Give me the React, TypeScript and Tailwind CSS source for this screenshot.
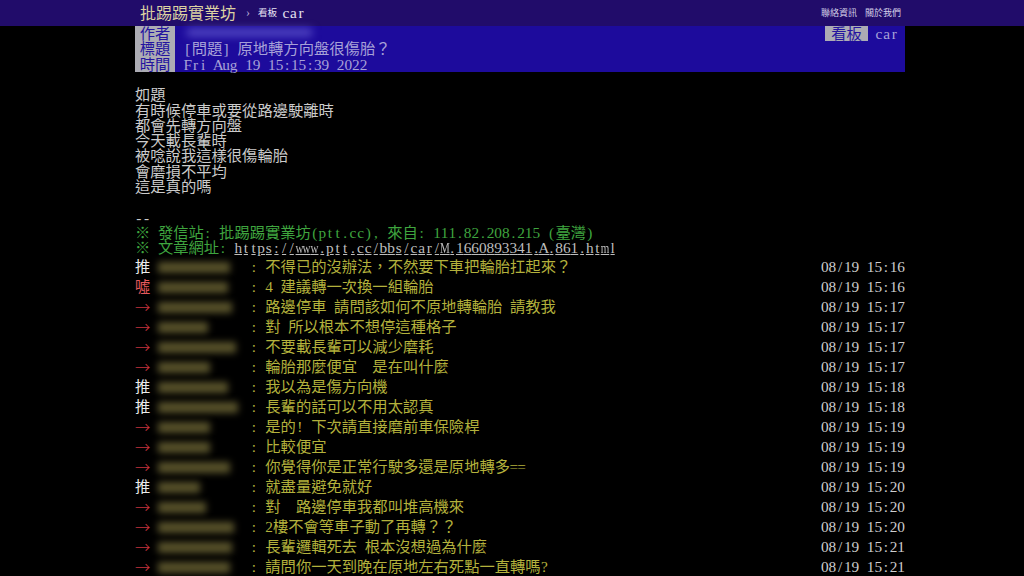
import React from "react";

const isWide = (c: string) => c.charCodeAt(0) >= 0x1100;

function M({ s, u = false }: { s: string; u?: boolean }) {
  return (
    <>
      {Array.from(s).map((c, i) => {
        const wide = isWide(c);
        const squeeze = c === "w" || c === "m" || c === "W" || c === "M";
        const arrow = c === "→";
        return (
          <span
            key={i}
            className={`inline-flex justify-center ${wide ? "w-[1em]" : "w-[0.5em]"} ${u ? "underline" : ""}`}
          >
            {arrow ? (
              <span className="inline-block font-['Noto_Sans_CJK_TC'] font-light">→</span>
            ) : (
              <span className={squeeze ? "inline-block scale-x-[0.72]" : ""}>{c === " " ? "\u00a0" : c}</span>
            )}
          </span>
        );
      })}
    </>
  );
}

const body = [
  "如題",
  "有時候停車或要從路邊駛離時",
  "都會先轉方向盤",
  "今天載長輩時",
  "被唸說我這樣很傷輪胎",
  "會磨損不平均",
  "這是真的嗎",
];

type C = [string, string, string, number];
const comments: C[] = [
  ["推", "不得已的沒辦法，不然要下車把輪胎扛起來？", "08/19 15:16", 72],
  ["噓", "4 建議轉一次換一組輪胎", "08/19 15:16", 70],
  ["→", "路邊停車 請問該如何不原地轉輪胎 請教我", "08/19 15:17", 74],
  ["→", "對 所以根本不想停這種格子", "08/19 15:17", 50],
  ["→", "不要載長輩可以減少磨耗", "08/19 15:17", 78],
  ["→", "輪胎那麼便宜　是在叫什麼", "08/19 15:17", 52],
  ["推", "我以為是傷方向機", "08/19 15:18", 70],
  ["推", "長輩的話可以不用太認真", "08/19 15:18", 80],
  ["→", "是的! 下次請直接磨前車保險桿", "08/19 15:19", 52],
  ["→", "比較便宜", "08/19 15:19", 52],
  ["→", "你覺得你是正常行駛多還是原地轉多==", "08/19 15:19", 72],
  ["推", "就盡量避免就好", "08/19 15:20", 42],
  ["→", "對　路邊停車我都叫堆高機來", "08/19 15:20", 48],
  ["→", "2樓不會等車子動了再轉？？", "08/19 15:20", 76],
  ["→", "長輩邏輯死去 根本沒想過為什麼", "08/19 15:21", 74],
  ["→", "請問你一天到晚在原地左右死點一直轉嗎?", "08/19 15:21", 72],
];

const tagColor: Record<string, string> = {
  "推": "text-[#ececec]",
  "噓": "text-[#e4585c]",
  "→": "text-[#c4323c]",
};

export default function App() {
  return (
    <div
      className="w-[1024px] h-[576px] overflow-hidden bg-black text-[15.3px] leading-[15.3px]"
      style={{ fontFamily: '"Liberation Serif", "Noto Sans CJK TC", serif' }}
    >
      {/* top bar */}
      <div className="flex h-[26px] items-center bg-[#210c6a]">
        <div className="ml-[140px] flex items-center">
          <span
            className="text-[16px] text-[#dcd2a2]"
            style={{ fontFamily: '"Noto Sans CJK TC", sans-serif' }}
          >
            批踢踢實業坊
          </span>
          <span className="ml-[10px] text-[12px] text-[#b8b0d8]">›</span>
          <span
            className="ml-[8px] text-[9.5px] text-[#e8e4f4]"
            style={{ fontFamily: '"Noto Sans CJK TC", sans-serif' }}
          >
            看板
          </span>
          <span className="ml-[5px] text-[15.3px] text-[#e4e0f0]">
            <M s="car" />
          </span>
        </div>
        <div
          className="ml-auto mr-[123px] flex gap-[8px] text-[9px] text-[#d4d0e8]"
          style={{ fontFamily: '"Noto Sans CJK TC", sans-serif' }}
        >
          <span>聯絡資訊</span>
          <span>關於我們</span>
        </div>
      </div>

      {/* article header */}
      <div className="ml-[135px] w-[770px] bg-[#1d0b9c] text-[#a8a2d8]">
        <div className="flex h-[15.33px] items-center">
          <span className="flex h-full w-[40px] items-center justify-center bg-[#acacb4] text-[#2414a0]">
            <M s="作者" />
          </span>
          <div className="ml-[12px] h-[7px] w-[125px] self-start mt-[3px] bg-[#5a50c8] blur-[4px]" />
          <div className="ml-auto flex h-full items-center pr-[7px]">
            <span className="flex h-full w-[43px] items-center justify-center bg-[#acacb4] text-[#2414a0]">
              <M s="看板" />
            </span>
            <span className="ml-[7px]">
              <M s="car" />
            </span>
          </div>
        </div>
        <div className="flex h-[15.33px] items-center">
          <span className="flex h-full w-[40px] items-center justify-center bg-[#acacb4] text-[#2414a0]">
            <M s="標題" />
          </span>
          <span className="ml-[9px]">
            <M s="[問題] 原地轉方向盤很傷胎？" />
          </span>
        </div>
        <div className="flex h-[15.34px] items-center">
          <span className="flex h-full w-[40px] items-center justify-center bg-[#acacb4] text-[#2414a0]">
            <M s="時間" />
          </span>
          <span className="ml-[9px]">
            <M s="Fri Aug 19 15:15:39 2022" />
          </span>
        </div>
      </div>

      {/* body */}
      <div className="ml-[135px] w-[770px] pt-[15.3px] text-[#cbcbcb]">
        {body.map((l, i) => (
          <div key={i} className="h-[15.3px] whitespace-nowrap">
            <M s={l} />
          </div>
        ))}
        <div className="h-[15.3px]" />
        <div className="h-[15.3px]">
          <M s="--" />
        </div>
        <div className="h-[15.3px] whitespace-nowrap text-[#3fa53f]">
          <M s="※ 發信站: 批踢踢實業坊(ptt.cc), 來自: 111.82.208.215 (臺灣)" />
        </div>
        <div className="h-[15.3px] whitespace-nowrap">
          <span className="text-[#3fa53f]">
            <M s="※ 文章網址: " />
          </span>
          <span className="text-[#bdbdbd]">
            <M s="https://www.ptt.cc/bbs/car/M.1660893341.A.861.html" u />
          </span>
        </div>

        {/* comments */}
        <div className="mt-[1.5px]">
          {comments.map(([tag, content, time, w], i) => (
            <div key={i} className="flex h-[20px] items-center whitespace-nowrap">
              <span className={`w-[23px] ${tagColor[tag]}`}>
                <M s={tag} />
              </span>
              <div className="flex w-[92px] items-center">
                <div className="h-[11px] bg-[#58522a] blur-[3.5px]" style={{ width: w }} />
              </div>
              <span className="text-[#b3b13c]">
                <M s={": " + content} />
              </span>
              <span className="ml-auto text-[#cdcdcd]">
                <M s={time} />
              </span>
            </div>
          ))}
        </div>
      </div>
    </div>
  );
}
